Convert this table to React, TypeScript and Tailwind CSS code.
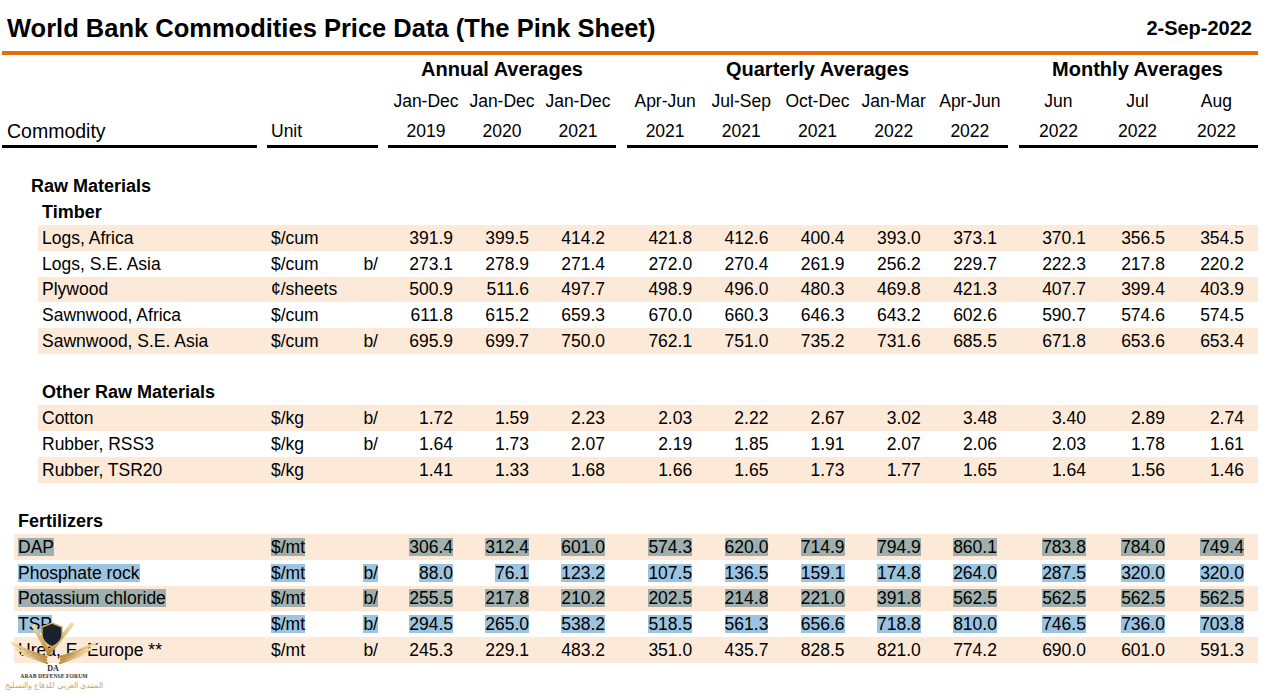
import clsx from "clsx";

const cn = clsx;

type Row = {
  name: string;
  unit: string;
  note?: string;
  annual: string[];
  quarterly: string[];
  monthly: string[];
};

const TIMBER: Row[] = [
  { name: "Logs, Africa", unit: "$/cum", annual: ["391.9", "399.5", "414.2"], quarterly: ["421.8", "412.6", "400.4", "393.0", "373.1"], monthly: ["370.1", "356.5", "354.5"] },
  { name: "Logs, S.E. Asia", unit: "$/cum", note: "b/", annual: ["273.1", "278.9", "271.4"], quarterly: ["272.0", "270.4", "261.9", "256.2", "229.7"], monthly: ["222.3", "217.8", "220.2"] },
  { name: "Plywood", unit: "¢/sheets", annual: ["500.9", "511.6", "497.7"], quarterly: ["498.9", "496.0", "480.3", "469.8", "421.3"], monthly: ["407.7", "399.4", "403.9"] },
  { name: "Sawnwood, Africa", unit: "$/cum", annual: ["611.8", "615.2", "659.3"], quarterly: ["670.0", "660.3", "646.3", "643.2", "602.6"], monthly: ["590.7", "574.6", "574.5"] },
  { name: "Sawnwood, S.E. Asia", unit: "$/cum", note: "b/", annual: ["695.9", "699.7", "750.0"], quarterly: ["762.1", "751.0", "735.2", "731.6", "685.5"], monthly: ["671.8", "653.6", "653.4"] },
];

const OTHER_RAW: Row[] = [
  { name: "Cotton", unit: "$/kg", note: "b/", annual: ["1.72", "1.59", "2.23"], quarterly: ["2.03", "2.22", "2.67", "3.02", "3.48"], monthly: ["3.40", "2.89", "2.74"] },
  { name: "Rubber, RSS3", unit: "$/kg", note: "b/", annual: ["1.64", "1.73", "2.07"], quarterly: ["2.19", "1.85", "1.91", "2.07", "2.06"], monthly: ["2.03", "1.78", "1.61"] },
  { name: "Rubber, TSR20", unit: "$/kg", annual: ["1.41", "1.33", "1.68"], quarterly: ["1.66", "1.65", "1.73", "1.77", "1.65"], monthly: ["1.64", "1.56", "1.46"] },
];

const FERTILIZERS: Row[] = [
  { name: "DAP", unit: "$/mt", annual: ["306.4", "312.4", "601.0"], quarterly: ["574.3", "620.0", "714.9", "794.9", "860.1"], monthly: ["783.8", "784.0", "749.4"] },
  { name: "Phosphate rock", unit: "$/mt", note: "b/", annual: ["88.0", "76.1", "123.2"], quarterly: ["107.5", "136.5", "159.1", "174.8", "264.0"], monthly: ["287.5", "320.0", "320.0"] },
  { name: "Potassium chloride", unit: "$/mt", note: "b/", annual: ["255.5", "217.8", "210.2"], quarterly: ["202.5", "214.8", "221.0", "391.8", "562.5"], monthly: ["562.5", "562.5", "562.5"] },
  { name: "TSP", unit: "$/mt", note: "b/", annual: ["294.5", "265.0", "538.2"], quarterly: ["518.5", "561.3", "656.6", "718.8", "810.0"], monthly: ["746.5", "736.0", "703.8"] },
  { name: "Urea, E. Europe **", unit: "$/mt", note: "b/", annual: ["245.3", "229.1", "483.2"], quarterly: ["351.0", "435.7", "828.5", "821.0", "774.2"], monthly: ["690.0", "601.0", "591.3"] },
];

const PINK = "bg-[#fde9d8]";

// text-selection look: greyish on pink rows, light blue on white rows
function Hl({ on, pink, children }: { on: boolean; pink: boolean; children: React.ReactNode }) {
  return (
    <span
      className={cn(
        "inline-block leading-[18px]",
        on && (pink ? "bg-[#9eafad]" : "bg-[#9cc3e0]")
      )}
    >
      {children}
    </span>
  );
}

function DataRow({ r, pink, fert, hl = false }: { r: Row; pink: boolean; fert?: boolean; hl?: boolean }) {
  return (
    <div
      className={cn(
        "flex h-[25.75px] items-center text-[17.5px]",
        fert ? "ml-[14px] w-[1244px]" : "ml-[38px] w-[1220px]",
        pink && PINK
      )}
    >
      <div className={cn("pl-[4px] whitespace-nowrap", fert ? "w-[243px]" : "w-[219px]")}>
        <Hl on={hl} pink={pink}>{r.name}</Hl>
      </div>
      <div className="ml-[10px] flex w-[111px] justify-between pl-[4px]">
        <Hl on={hl} pink={pink}>{r.unit}</Hl>
        {r.note && <Hl on={hl} pink={pink}>{r.note}</Hl>}
      </div>
      <div className="ml-[10px] flex">
        {r.annual.map((v, i) => (
          <div key={i} className="w-[76px] pr-[11px] text-right">
            <Hl on={hl} pink={pink}>{v}</Hl>
          </div>
        ))}
      </div>
      <div className="ml-[11px] flex">
        {r.quarterly.map((v, i) => (
          <div key={i} className="w-[76.2px] pr-[11px] text-right">
            <Hl on={hl} pink={pink}>{v}</Hl>
          </div>
        ))}
      </div>
      <div className="ml-[11px] flex">
        {r.monthly.map((v, i) => (
          <div key={i} className="w-[79px] pr-[12px] text-right">
            <Hl on={hl} pink={pink}>{v}</Hl>
          </div>
        ))}
      </div>
    </div>
  );
}

function Section({ title, indent }: { title: string; indent: string }) {
  return (
    <div className={cn("flex h-[25.75px] items-center text-[18px] font-bold", indent)}>{title}</div>
  );
}

function Blank() {
  return <div className="h-[25.75px]" />;
}

function HeaderCells({ labels }: { labels: [string[], string[], string[]] }) {
  const [a, q, m] = labels;
  return (
    <>
      <div className="ml-[10px] flex">
        {a.map((t, i) => (
          <div key={i} className="w-[76px] text-center">{t}</div>
        ))}
      </div>
      <div className="ml-[11px] flex">
        {q.map((t, i) => (
          <div key={i} className="w-[76.2px] text-center">{t}</div>
        ))}
      </div>
      <div className="ml-[11px] flex">
        {m.map((t, i) => (
          <div key={i} className="w-[79px] text-center">{t}</div>
        ))}
      </div>
    </>
  );
}

function Watermark() {
  return (
    <div className="absolute left-0 top-[612px] flex w-[108px] flex-col items-center">
      <svg width="108" height="61" viewBox="0 0 108 61">
        <defs>
          <linearGradient id="gold" x1="0" y1="0" x2="0" y2="1">
            <stop offset="0" stopColor="#f4e2ae" />
            <stop offset="1" stopColor="#b8893c" />
          </linearGradient>
        </defs>
        {/* wings */}
        <g fill="none" stroke="url(#gold)" strokeLinecap="round">
          <path d="M12 31 Q28 40 46 45" strokeWidth="3" />
          <path d="M16 37 Q30 43 46 48" strokeWidth="2.6" />
          <path d="M22 42 Q34 46 47 51" strokeWidth="2.2" />
          <path d="M95 31 Q79 40 61 45" strokeWidth="3" />
          <path d="M91 37 Q77 43 61 48" strokeWidth="2.6" />
          <path d="M85 42 Q73 46 60 51" strokeWidth="2.2" />
        </g>
        {/* check mark */}
        <path d="M33 13 L49 41 L73 11" fill="none" stroke="url(#gold)" strokeWidth="4" strokeLinejoin="miter" />
        {/* shield */}
        <path d="M42 15 L52 11 L62 15 L62 23 Q62 30 52 35 Q42 30 42 23 Z" fill="#18232e" stroke="#d2ac5a" strokeWidth="1.4" />
        <text x="53" y="59" textAnchor="middle" fontSize="8" fontWeight="bold" fontFamily="'Liberation Serif', serif" fill="#1c2530">
          DA
        </text>
      </svg>
      <div className="whitespace-nowrap font-['Liberation_Serif',serif] text-[5.6px] leading-[7px] font-bold tracking-[0.1px] text-[#2d3238]">
        ARAB DEFENSE FORUM
      </div>
      <div
        className="whitespace-nowrap font-['Noto_Sans',sans-serif] text-[8px] leading-[10px] text-[#c7a877]"
        dir="rtl"
      >
        المنتدى العربي للدفاع والتسليح
      </div>
    </div>
  );
}

export default function App() {
  return (
    <div className="relative h-[694px] w-[1267px] overflow-hidden bg-white font-['Liberation_Sans',Arial,sans-serif] text-black">
      <div className="flex h-[51px] items-start justify-between pl-[7px] pr-[15px]">
        <div className="mt-[16px] text-[25.5px] leading-[25.5px] font-bold">
          World Bank Commodities Price Data (The Pink Sheet)
        </div>
        <div className="mt-[18px] text-[20px] leading-[20px] font-bold">2-Sep-2022</div>
      </div>
      <div className="ml-[2px] h-[4px] w-[1256px] bg-[#e46c0a]" />

      <div className="flex h-[28px] items-center text-[20px] font-bold">
        <div className="ml-[388px] w-[228px] text-center">Annual Averages</div>
        <div className="ml-[11px] w-[381px] text-center">Quarterly Averages</div>
        <div className="ml-[11px] w-[237px] text-center">Monthly Averages</div>
      </div>
      <div className="flex h-[36px] items-center pl-[2px] text-[17.5px]">
        <div className="w-[255px]" />
        <div className="ml-[10px] w-[111px]" />
        <HeaderCells
          labels={[
            ["Jan-Dec", "Jan-Dec", "Jan-Dec"],
            ["Apr-Jun", "Jul-Sep", "Oct-Dec", "Jan-Mar", "Apr-Jun"],
            ["Jun", "Jul", "Aug"],
          ]}
        />
      </div>
      <div className="flex h-[25px] items-center pl-[2px] text-[17.5px]">
        <div className="w-[255px] pl-[5px] text-[19.5px]">Commodity</div>
        <div className="ml-[10px] w-[111px] pl-[4px]">Unit</div>
        <HeaderCells
          labels={[
            ["2019", "2020", "2021"],
            ["2021", "2021", "2021", "2022", "2022"],
            ["2022", "2022", "2022"],
          ]}
        />
      </div>
      <div className="mt-[1px] flex pl-[2px]">
        <div className="h-[3px] w-[255px] bg-black" />
        <div className="ml-[10px] h-[3px] w-[111px] bg-black" />
        <div className="ml-[10px] h-[3px] w-[228px] bg-black" />
        <div className="ml-[11px] h-[3px] w-[381px] bg-black" />
        <div className="ml-[11px] h-[3px] w-[239px] bg-black" />
      </div>

      <div className="h-[25.5px]" />
      <Section title="Raw Materials" indent="pl-[31px]" />
      <Section title="Timber" indent="pl-[42px]" />
      {TIMBER.map((r, i) => (
        <DataRow key={r.name} r={r} pink={i % 2 === 0} />
      ))}
      <Blank />
      <Section title="Other Raw Materials" indent="pl-[42px]" />
      {OTHER_RAW.map((r, i) => (
        <DataRow key={r.name} r={r} pink={i % 2 === 0} />
      ))}
      <Blank />
      <Section title="Fertilizers" indent="pl-[18px]" />
      {FERTILIZERS.map((r, i) => (
        <DataRow key={r.name} r={r} pink={i % 2 === 0} fert hl={i < 4} />
      ))}

      <Watermark />
    </div>
  );
}
